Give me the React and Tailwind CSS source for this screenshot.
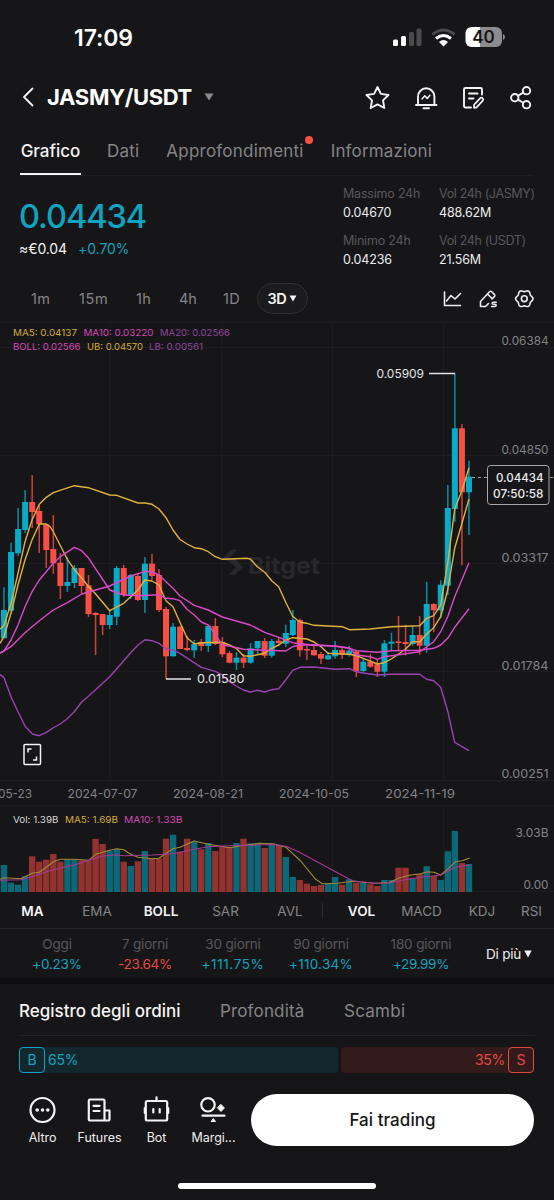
import React from 'react';

// top, bottom, high, low, direction (y coordinates inside the chart)
const candles = [
  [610, 638.3, 587.3, 638.3, 'u'], [552, 610.7, 542.7, 612, 'u'], [529, 553.3, 508, 556, 'u'],
  [502, 530, 490, 533, 'u'], [502, 512, 475, 528, 'd'], [511, 524.3, 505, 553, 'd'],
  [524.3, 550, 524, 568, 'd'], [549, 563.3, 515, 574, 'd'], [562.7, 586, 553, 599, 'd'],
  [582, 586, 557, 592, 'u'], [568, 583, 565, 588, 'u'], [568, 586, 568, 593, 'd'],
  [585.3, 614, 575, 617, 'd'], [613, 615, 612, 655, 'd'], [614, 625, 614, 635, 'd'],
  [615, 625, 610, 629, 'u'], [568, 616.7, 566, 625, 'u'], [568, 595, 565, 597, 'd'],
  [575, 595, 574, 599, 'u'], [576, 600, 574, 601, 'd'], [563.7, 600, 557, 613, 'u'],
  [563.7, 576, 554, 580, 'd'], [575, 610, 569, 612, 'd'], [609, 656.3, 607, 679, 'd'],
  [626.7, 656.3, 623, 656.3, 'u'], [626.7, 649, 626, 649, 'd'], [648, 650, 636, 651, 'd'],
  [644.3, 650.3, 640, 657.7, 'u'], [642, 646, 639, 651, 'd'], [626, 646, 626, 652, 'u'],
  [626, 644, 618, 645, 'd'], [642, 654.3, 637, 657, 'd'], [653, 662.7, 651, 663.3, 'd'],
  [657.7, 662.7, 652, 670, 'u'], [657.7, 662.7, 654, 668, 'd'], [648.3, 662.7, 643, 663.7, 'u'],
  [641, 648.3, 641, 654, 'u'], [641, 655.7, 638, 658, 'd'], [641, 655.7, 639, 657.7, 'u'],
  [640.7, 643, 637.7, 646, 'd'], [633, 643.7, 624.7, 647, 'u'], [620, 635, 610, 636, 'u'],
  [620, 650.3, 618.7, 656.7, 'd'], [649, 650.5, 646, 660, 'd'], [650, 655.3, 644, 655.7, 'd'],
  [654, 658.7, 652, 664, 'd'], [655.3, 659.3, 652, 660, 'u'], [650, 656.3, 641, 658.7, 'u'],
  [650, 654.7, 647, 659, 'd'], [650.7, 655, 646, 656.7, 'u'], [651.5, 671.5, 650, 677, 'd'],
  [661.7, 671, 658, 672, 'u'], [661.7, 666.7, 654, 667.7, 'd'], [664.3, 671.7, 659, 677, 'd'],
  [643.3, 671.7, 640, 677, 'u'], [641.7, 643.7, 632.7, 650, 'u'], [641.5, 643, 616, 650, 'd'],
  [642, 644, 624.7, 655.3, 'd'], [635, 644, 626, 645.7, 'u'], [635, 645.7, 616, 654.7, 'd'],
  [604, 645.7, 581.7, 652.7, 'u'], [604, 610.3, 603.3, 632.3, 'd'], [584.7, 610.3, 580.3, 618.3, 'u'],
  [508, 585.7, 485, 595, 'u'], [428.3, 509, 373.3, 521.7, 'u'], [428.3, 492.3, 424, 565.3, 'd'],
  [476.7, 492.3, 460.7, 535, 'u'],
];

const volumes = [
  865, 882.7, 884.7, 876.3, 856.3, 861.7, 859.7, 854, 861.7, 859.3, 859.3, 860.3, 860.3, 839, 844,
  851, 849, 861.7, 866, 861.3, 851, 858.3, 858.3, 838.7, 834.7, 851.7, 838.7, 841.7, 849.3, 843,
  851, 846.3, 847, 843, 838.7, 843.3, 843.3, 848, 843.3, 845, 857, 877, 880, 883.7, 886, 885, 884,
  877, 884.7, 879.3, 882.7, 883, 884.3, 886, 880, 880, 867.7, 867.7, 878.7, 874, 866.3, 876, 880,
  851.3, 831, 863, 864,
];

const lines = [
  {
    color: '#e0b13c',
    points: '0,629 4,625.7 11,603.3 18,573.3 25,541.7 32,520 39.3,504.3 46.3,497.3 53.3,492.7 63,489.3 74.3,485.7 88.3,487.7 109.7,495 116.7,495.3 138,503 145,503 152,504.3 159,509 166,517.7 173,530 180,539.5 187,544 194.3,547.7 201.3,548.7 208.3,551.7 215.3,556.7 222.3,559.3 229.3,559 246.7,558.3 250.3,559 257.3,566.7 264.7,572.3 271.7,580.7 278.7,586.7 285.7,602.3 292.7,616.3 300,622.3 307,623.3 314,625.3 342.3,626.7 349.3,629.7 370.3,629 391.3,626.7 419.7,625.7 426.7,618.3 433.7,615.7 440.7,605 447.7,563.3 454.7,509 462,490.5 469,467.7',
  },
  {
    color: '#e0b13c',
    points: '0,643.3 4,636.7 11,613.3 18,585 25,560 32,540 39.3,524 46.3,524 50,526.7 53.3,531.7 67.3,559.3 74.3,569.3 88.7,586.7 95.7,594 109.7,610.7 123.7,603.3 138,590 145,580 152,581 159,585 166,600.7 173,606.7 180,622.5 187,637.7 194.3,644 201.3,642.7 222.3,642.3 229.3,645 236.3,648.3 243.3,655.7 250.3,656.3 264.7,653.3 271.7,648.3 278.7,645 285.7,640 292.7,637.7 307,639 314,642 321,646.7 328,653.3 342.3,654 350,654.3 356.3,655.7 363.3,658.3 377.3,664 384.3,662.7 391.3,659 405.7,649 412.7,641.7 419.7,641.7 426.7,634 433.7,627.7 440.7,616.7 447.7,590 454.7,548.3 469,499',
  },
  {
    color: '#dd49c6',
    points: '0,653.3 4,651 11,640 18,625 25,606.7 32,591.7 39.3,580 53.3,563.3 60.3,556.7 74.3,547.3 81.7,550.7 88.7,558.3 109.7,590 123.7,595 138,595.7 159,594.7 166,598.3 173,598.7 180,600.7 187,609.3 194.3,615 201.3,622 208.3,625 215.3,634.3 222.3,645 229.3,646 243.3,649.3 285.7,651 292.7,646.7 300,645 314,644.7 335,646.3 349.3,648 356.3,655 370.3,656.7 377.3,659.3 384.3,656.7 405.7,653.7 419.7,651.7 426.7,646.7 433.7,641.7 440.7,631.7 447.7,616.7 454.7,596.7 469,562.7',
  },
  {
    color: '#dd49c6',
    points: '0,652.7 4,651 11,646.7 25,632.7 39.3,620.7 53.3,610 67.3,602.7 81.7,594 109.7,586 130.7,576 145,571.3 152,572 159,575 166,581.7 173,588.3 180,596 194.3,605.3 208.3,610 222.3,617 250.3,625 264.7,632.3 278.7,637.3 292.7,642.7 314,645.3 335,646 349.3,648.3 356.7,650.7 377.3,652.3 391.3,650.7 419.7,650.3 433.7,648.3 440.7,645 447.7,638.3 454.7,627.3 469,608.7',
  },
  {
    color: '#9a43b0',
    points: '0,674.3 4,677.7 11,696.7 18,711.7 25.4,726.7 32.5,734 39,735.7 46,732.7 53,728 60,724 67,719 74,712 81.7,702 88.7,696 109.7,676.7 130.7,652.7 138,645 145,639.7 152,640.7 159,643.3 166,649 173,650 180,653.3 201.3,667.3 215.3,671.3 222.3,675 229.3,681.7 236.3,686 243.3,690 250.3,692 257.3,690.3 264.7,692 271.7,689.7 278.7,688.7 285.7,680 292.7,670.3 300,667.3 314,667 335,669.3 349.3,668.7 356.3,671.7 363.3,673 377.3,675 391.3,674.3 419.7,674.3 426.7,679.3 433.7,680.7 440.7,687.3 447.7,711 454.7,742.3 469,750.7',
  },
];

const volumeLines = [
  {
    color: '#a58a35',
    points: '0,879.3 4,877.7 21,878.7 25,876.7 32,873.3 39.3,872.3 46.3,867.3 53.3,861.7 60.3,859.3 74.3,859.3 88.7,860.3 95.7,854.3 109.7,850.3 116.7,848.7 123.7,849.7 130.7,854.3 138,857.3 152,858.7 159,858.3 166,853.3 173,848.7 180,847.3 194.3,841 208.3,844.3 230,847.7 241.7,845.7 260,843.3 274,844 286,847.3 300.7,861 315.7,879.3 322.3,883.7 337.3,883.3 354,881.3 374,883.3 389,882.7 399,878 410.7,875 420.7,873.7 427.3,871.7 434,872.3 440.7,875 447.3,869.3 455.7,861.7 462.3,860.7 469.7,858',
  },
  {
    color: '#a43a94',
    points: '0,880.3 21.3,879.7 32,876.7 46.3,871.7 60.3,868 74.3,865 88.7,860.3 102.7,856 116.7,854.7 123.7,855.7 152,855 173,853.7 194.3,849.3 208.3,846.7 230,845.7 274,844.5 286,846.3 299,852 315.7,861 332.3,870 352.3,880.7 374,883.3 389,883 407.3,879.3 424,877 440.7,875 455.7,867 469.7,865.3',
  },
];

const priceLabels = [
  ['0.06384', 345.3], ['0.04850', 453.5], ['0.03317', 561.5], ['0.01784', 669.5], ['0.00251', 777.5],
];
const dates = [
  ['2024-07-07', 67.5], ['2024-08-21', 173], ['2024-10-05', 279], ['2024-11-19', 385],
];
const legend = [
  ['MA5: 0.04137', 13, 336, 64, '#d5ac37'],
  ['MA10: 0.03220', 83.5, 336, 70, '#d545b7'],
  ['MA20: 0.02566', 160, 336, 70, '#8f459f'],
  ['BOLL: 0.02566', 13, 349.6, 67.5, '#d545b7'],
  ['UB: 0.04570', 87, 349.6, 56, '#d5ac37'],
  ['LB: 0.00561', 149, 349.6, 54, '#8f459f'],
  ['Vol: 1.39B', 13, 822.5, 45.5, '#d5d5d7'],
  ['MA5: 1.69B', 65, 822.5, 53, '#d5ac37'],
  ['MA10: 1.33B', 124, 822.5, 58.5, '#d545b7'],
];

const candleX = (i) => 4 + i * 7.045;

// Wavy six-lobed outline for the settings icon
const gearPath = (cx, cy) => {
  const points = [];
  for (let deg = 0; deg < 360; deg += 6) {
    const a = (deg * Math.PI) / 180;
    const r = 7.9 + 0.8 * Math.cos(6 * a);
    points.push(`${(cx + r * Math.cos(a)).toFixed(2)} ${(cy + r * Math.sin(a)).toFixed(2)}`);
  }
  return `M${points.join('L')}Z`;
};

const ChartText = ({ width, children, ...props }) => (
  <text textLength={width} lengthAdjust="spacingAndGlyphs" {...props}>{children}</text>
);

const Chart = () => (
  <svg width="554" height="574" viewBox="0 320 554 574" className="block shrink-0" fontFamily="Inter, sans-serif">
    {/* Grid */}
    <g stroke="#1d1d1f" strokeWidth="1">
      {[347.5, 455.5, 563.5, 671.5, 891.5].map((y) => <path key={y} d={`M0 ${y}H554`} />)}
      {[110, 222, 332.5, 443.5].map((x) => <path key={x} d={`M${x} 322V780M${x} 806V892`} />)}
      <path d="M0 322H554M0 780.5H554M0 806H554" stroke="#212123" />
    </g>

    {/* Watermark */}
    <g fill="#28282b">
      <path d="M222 559l9-9.500h6.500l-8.500 8.500h5l9 9-8.500 8h-6l7.500-8-8-6z" />
      <ChartText x="248" y="574" fontSize="23" fontWeight="700" width="72">Bitget</ChartText>
    </g>

    {/* Candles */}
    {candles.map(([top, bottom, high, low, dir], i) => {
      const x = candleX(i);
      return (
        <g key={i} fill={dir === 'u' ? '#07abc8' : '#f94f45'}>
          <rect x={x - 0.75} y={high} width="1.5" height={low - high} opacity="0.8" />
          <rect x={x - 3} y={top} width="6" height={Math.max(bottom - top, 1.5)} />
        </g>
      );
    })}
    {lines.map((line, i) => (
      <polyline key={i} points={line.points} fill="none" stroke={line.color} strokeWidth="1.4" strokeLinejoin="round" />
    ))}

    {/* Volume */}
    {volumes.map((y, i) => (
      <rect key={i} x={candleX(i) - 3.2} y={y} width="6.4" height={892 - y} fill={candles[i][4] === 'u' ? '#0b6878' : '#923330'} />
    ))}
    {volumeLines.map((line, i) => (
      <polyline key={i} points={line.points} fill="none" stroke={line.color} strokeWidth="1.1" strokeLinejoin="round" />
    ))}

    {/* High and low markers */}
    <path d="M429 373.500H455M166 679H191" stroke="#e4e4e6" strokeWidth="1.300" />
    <g fill="#e4e4e6" fontSize="11.700">
      <ChartText x="376.500" y="378.300" width="47.500">0.05909</ChartText>
      <ChartText x="197" y="683.300" width="47.500">0.01580</ChartText>
    </g>

    {/* Axis labels */}
    <g fill="#838385" fontSize="11.700">
      {priceLabels.map(([label, y]) => <ChartText key={label} x="501.500" y={y} width="47">{label}</ChartText>)}
      <ChartText x="515.500" y="836.800" width="33">3.03B</ChartText>
      <ChartText x="523.500" y="889.300" width="25">0.00</ChartText>
    </g>
    <g fill="#838385" fontSize="11.500">
      <ChartText x="-2" y="798" width="34">05-23</ChartText>
      {dates.map(([label, x]) => <ChartText key={label} x={x} y="798" width="70">{label}</ChartText>)}
    </g>
    {legend.map(([label, x, y, width, color]) => (
      <ChartText key={label} x={x} y={y} width={width} fill={color} fontSize="9.500">{label}</ChartText>
    ))}

    {/* Current price */}
    <path d="M472 477.500H554" stroke="#a0a0a2" strokeWidth="1" strokeDasharray="3 3" />
    <rect x="487.500" y="465.500" width="61.500" height="39" rx="3" fill="#161618" stroke="#a9a9ab" />
    <g fill="#ededef" fontSize="11.700" fontWeight="500">
      <ChartText x="496" y="482.200" width="47.500">0.04434</ChartText>
      <ChartText x="493" y="497.800" width="50.500">07:50:58</ChartText>
    </g>

    {/* Fullscreen */}
    <g fill="none" stroke="#f4f4f4" strokeWidth="1.500">
      <rect x="24" y="744.500" width="16.500" height="20" rx="1" />
      <path d="M28 752.500V749h3.500M36.500 756.500V760H33" />
    </g>
  </svg>
);

const StatusBar = () => (
  <div className="flex h-[76px] shrink-0 items-center justify-between pl-[74px] pr-[48px]">
    <span className="text-[23px] font-semibold leading-7 tracking-[-0.100px]">17:09</span>
    <svg width="114" height="22" viewBox="392 27 114 22">
      <g fill="#fff">
        <rect x="393" y="39.500" width="5" height="6.500" rx="1.500" />
        <rect x="401" y="36" width="5" height="10" rx="1.500" />
        <g fill="#4b4b4d">
          <rect x="409" y="32" width="5" height="14" rx="1.500" />
          <rect x="416.500" y="28.500" width="5" height="17.500" rx="1.500" />
        </g>
      </g>
      <g fill="none" strokeWidth="3">
        <path d="M432.500 34.500Q443.500 25.500 454.500 34.500" stroke="#4b4b4d" />
        <path d="M436 38.500Q443.500 32.500 451 38.500" stroke="#fff" />
      </g>
      <path d="M439 42Q443.500 38 448 42L443.500 46.500Z" fill="#fff" />
      <path d="M471.500 27H480V47H471.500a6 6 0 0 1-6-6V33a6 6 0 0 1 6-6Z" fill="#fff" />
      <path d="M480 27h16a6 6 0 0 1 6 6v8a6 6 0 0 1-6 6H480Z" fill="#8c8c8e" />
      <path d="M503 34q2 1 2 3t-2 3Z" fill="#8c8c8e" />
      <text x="483.500" y="43" textAnchor="middle" fontSize="17" fontWeight="600" fontFamily="Inter, sans-serif" fill="#161618">40</text>
    </svg>
  </div>
);

const Header = () => (
  <div className="flex h-[42px] shrink-0 items-center pl-[22px] pr-[20px]">
    <svg width="13" height="20" viewBox="0 0 13 20" fill="none" stroke="#f4f4f4" strokeWidth="1.800" strokeLinecap="round" strokeLinejoin="round">
      <path d="M10.500 1.500L2 10l8.500 8.500" />
    </svg>
    <h1 className="ml-[12px] text-[22px] font-bold leading-7 tracking-[-0.350px]">JASMY/USDT</h1>
    <svg className="ml-3" width="10" height="8" viewBox="0 0 10 8" fill="#8c8c8e"><path d="M.5.500h9L5 7.500z" /></svg>
    <svg className="ml-auto mt-[2px]" width="170" height="26" viewBox="364 85 170 26" fill="none" stroke="#f4f4f4" strokeWidth="1.900" strokeLinecap="round" strokeLinejoin="round">
      <path d="M377.500 87l3.400 6.900 7.600 1.100-5.500 5.400 1.300 7.600-6.800-3.600-6.800 3.600 1.300-7.600-5.500-5.400 7.600-1.100z" />
      <path d="M416 105h20.500M418 105v-8.500a8.200 8.200 0 0 1 16.400 0v8.500" />
      <path d="M423.500 108.300h5.500" />
      <path d="M422 99l2.800-3.200 2.400 2.600 2.700-3.200" strokeWidth="1.500" />
      <path d="M471 107.500h-5.500a1.500 1.500 0 0 1-1.500-1.500V89.500a1.500 1.500 0 0 1 1.500-1.500h15a1.500 1.500 0 0 1 1.500 1.500v5M469 93.500h8.500M469 98.500h4.500" />
      <path d="M474 107.800v-3l6-6.500a1.800 1.800 0 0 1 2.600 2.600l-6 6.500z" strokeWidth="1.700" />
      <circle cx="526.500" cy="90.700" r="3.700" /><circle cx="514.800" cy="97.700" r="3.700" /><circle cx="526.500" cy="104.700" r="3.700" />
      <path d="M518 95.800l5.200-3.200M518 99.600l5.200 3.200" />
    </svg>
  </div>
);

const Tabs = () => (
  <div className="mx-[20px] flex h-[58px] shrink-0 border-b border-[#202022] text-[17px] leading-6 text-[#858587]">
    <div className="flex w-[61px] flex-col items-center border-b-[2.500px] border-[#f4f4f4] pt-[21px] font-medium text-[#f4f4f4]">Grafico</div>
    <div className="ml-[26px] pt-[21px] tracking-[0.200px]">Dati</div>
    <div className="relative ml-[27px] pt-[21px] tracking-[0.230px]">
      Approfondimenti
      <span className="absolute -right-[9px] top-[18px] h-2 w-2 rounded-full bg-[#f94f45]" />
    </div>
    <div className="ml-[27px] pt-[21px] tracking-[0.150px]">Informazioni</div>
  </div>
);

const Stat = ({ label, value }) => (
  <div className="h-[47px] text-[12.500px] leading-[19px]">
    <p className="tracking-[-0.200px] text-[#58585a]">{label}</p>
    <p className="tracking-[-0.150px] text-[#ededef]">{value}</p>
  </div>
);

const PriceSummary = () => (
  <div className="flex h-[104px] shrink-0 justify-between pl-[19px]">
    <div className="pt-[21px]">
      <p className="text-[32.500px] font-medium leading-10 tracking-[-1.050px] text-[#0fa3bf]">0.04434</p>
      <p className="mt-[2px] text-[14px] leading-5 text-[#f4f4f4]"><span className="tracking-[-0.100px]">≈€0.04</span> <span className="ml-[7px] tracking-[-0.050px] text-[#0fa3bf]">+0.70%</span></p>
    </div>
    <div className="flex pt-[8px]">
      <div className="w-[96px]">
        <Stat label="Massimo 24h" value="0.04670" />
        <Stat label="Minimo 24h" value="0.04236" />
      </div>
      <div className="w-[115px] whitespace-nowrap">
        <Stat label={<span className="tracking-[-0.350px]">Vol 24h (JASMY)</span>} value="488.62M" />
        <Stat label={<span className="tracking-[-0.350px]">Vol 24h (USDT)</span>} value="21.56M" />
      </div>
    </div>
  </div>
);

const Timeframes = () => (
  <div className="flex h-[40px] shrink-0 items-center pl-[31px] pr-[19px] pb-[3px] text-[14.500px] leading-5 text-[#858587]">
    <span className="w-[48px] tracking-[0.300px]">1m</span>
    <span className="w-[57px] tracking-[0.600px]">15m</span>
    <span className="w-[43px] tracking-[0.400px]">1h</span>
    <span className="w-[44px]">4h</span>
    <span className="w-[34px] tracking-[0.300px]">1D</span>
    <span className="flex h-[31px] w-[51px] items-center justify-center gap-[3px] rounded-full border border-[#303032] bg-[#1b1b1d] font-semibold tracking-[-0.400px] text-[#f4f4f4]">
      3D
      <svg width="8" height="7" viewBox="0 0 8 7" fill="#f4f4f4"><path d="M.5.500h7L4 6.500z" /></svg>
    </span>
    <svg className="ml-auto" width="94" height="20" viewBox="441 288.500 94 20" fill="none" stroke="#ededef" strokeWidth="1.600" strokeLinecap="round" strokeLinejoin="round">
      <path d="M444.500 291.500v13.500h16M446.500 300.500l4.500-5.500 4 3.500 5.500-5.500" />
      <path d="M485.500 306h-5v-5l9-9.700a1.500 1.500 0 0 1 2.200 0l2.600 2.600a1.500 1.500 0 0 1 0 2.200l-2.300 2.400M485.500 306l3-3M487.500 293.500l4.500 4.500" />
      <path d="M496.300 301.800h-2.800q-1.500 0-1.500 1t1.500 1h1.300q1.500 0 1.500 1t-1.500 1.200H491.500" strokeWidth="1.400" />
      <path d={gearPath(524.3, 298.2)} />
      <circle cx="524.300" cy="298.200" r="2.900" />
    </svg>
  </div>
);

const Indicators = () => (
  <div className="flex h-[35px] shrink-0 items-center border-b border-[#252527] text-[13.500px] leading-5 text-[#858587]">
    <span className="w-[65px] text-center font-semibold text-[#f4f4f4]">MA</span>
    <span className="w-[64px] text-center">EMA</span>
    <span className="w-[64px] text-center font-semibold text-[#f4f4f4]">BOLL</span>
    <span className="w-[65px] text-center">SAR</span>
    <span className="w-[64px] text-center">AVL</span>
    <span className="h-4 w-px bg-[#2c2c2e]" />
    <span className="w-[77px] text-center font-semibold text-[#f4f4f4]">VOL</span>
    <span className="w-[43px] text-center">MACD</span>
    <span className="w-[78px] text-center">KDJ</span>
    <span className="w-[20px] text-center">RSI</span>
  </div>
);

const performance = [
  { label: 'Oggi', value: '+0.23%', width: 'w-[88px]', color: 'text-[#0fa3bf] tracking-[-0.200px]' },
  { label: '7 giorni', value: '-23.64%', width: 'w-[88px]', color: 'text-[#e54a42] tracking-[-0.250px]' },
  { label: '30 giorni', value: '+111.75%', width: 'w-[88px]', color: 'text-[#0fa3bf] tracking-[0.600px]' },
  { label: '90 giorni', value: '+110.34%', width: 'w-[88px]', color: 'text-[#0fa3bf] tracking-[0.250px]' },
  { label: '180 giorni', value: '+29.99%', width: 'w-[112px]', color: 'text-[#0fa3bf] tracking-[-0.350px]' },
];

const Performance = () => (
  <div className="flex h-[49px] shrink-0 pl-[13px] text-[13.500px] leading-5">
    {performance.map((item) => (
      <div key={item.label} className={`${item.width} pt-[5px] text-center`}>
        <p className="tracking-[-0.150px] text-[#58585a]">{item.label}</p>
        <p className={item.color}>{item.value}</p>
      </div>
    ))}
    <div className="ml-[9px] flex items-center gap-[3px] whitespace-nowrap tracking-[-0.200px] text-[#ededef]">
      Di più
      <svg width="8" height="8" viewBox="0 0 8 8" fill="#f4f4f4"><path d="M.3.500h7.400L4 7.500z" /></svg>
    </div>
  </div>
);

const OrderBook = () => (
  <div className="h-[104px] shrink-0 px-[19px]">
    <div className="flex h-[52px] items-center border-b border-[#232325] pt-[2px] text-[17px] leading-6 text-[#858587]">
      <span className="w-[201px] whitespace-nowrap font-medium text-[#f4f4f4]">Registro degli ordini</span>
      <span className="w-[124px] tracking-[0.150px]">Profondità</span>
      <span className="tracking-[0.250px]">Scambi</span>
    </div>
    <div className="mt-[11px] flex h-[26px] w-[515px] gap-[3px] text-[14px] leading-5">
      <div className="flex w-[319px] items-center rounded bg-[#12282e] text-[#0fa3bf]">
        <span className="flex h-[26px] w-[26px] items-center justify-center rounded border border-[#0fa3bf]">B</span>
        <span className="ml-[3px] tracking-[-0.200px]">65%</span>
      </div>
      <div className="flex flex-1 items-center justify-end rounded bg-[#331b1c] text-[#e54a42]">
        <span className="mr-[3px] tracking-[-0.300px]">35%</span>
        <span className="flex h-[26px] w-[26px] items-center justify-center rounded border border-[#e54a42]">S</span>
      </div>
    </div>
  </div>
);

const NavItem = ({ label, children }) => (
  <div className="flex w-[57px] flex-col items-center">
    <svg width="30" height="30" viewBox="0 0 30 30" fill="none" stroke="#f4f4f4" strokeWidth="2.200" strokeLinecap="round" strokeLinejoin="round">
      {children}
    </svg>
    <span className="mt-[5px] text-[12.500px] leading-4 tracking-[-0.050px] text-[#ededef]">{label}</span>
  </div>
);

const BottomBar = () => (
  <div className="flex h-[112px] shrink-0 pl-[14px] pr-[20px]">
    <div className="flex pt-[7px]">
      <NavItem label="Altro">
        <circle cx="14.500" cy="15" r="12" />
        <g fill="#f4f4f4" stroke="none">
          <circle cx="9.200" cy="15" r="1.800" /><circle cx="14.500" cy="15" r="1.800" /><circle cx="19.800" cy="15" r="1.800" />
        </g>
      </NavItem>
      <NavItem label="Futures">
        <path d="M19.500 25.500H5A1.200 1.200 0 0 1 3.800 24.300V5.700A1.200 1.200 0 0 1 5 4.500H18.300a1.200 1.200 0 0 1 1.200 1.200zM19.500 15.500h5v8.800a1.200 1.200 0 0 1-1.200 1.200h-3.800M8.500 10.800h6M8.500 16h6" />
      </NavItem>
      <NavItem label="Bot">
        <rect x="3.800" y="6" width="21.400" height="19.500" rx="1.500" />
        <path d="M14.500 2.300v3.500M2.800 13v5M26.200 13v5M11.300 14v3.500M17.700 14v3.500" />
      </NavItem>
      <NavItem label="Margi...">
        <circle cx="9" cy="9.800" r="6.700" />
        <path d="M3.500 20.700h22" />
        <path d="M22 9.500l3.400 3.500-3.400 3.500-3.400-3.500zM14.500 23.800l2 2.700h-4z" fill="#f4f4f4" strokeWidth="1" />
      </NavItem>
    </div>
    <button className="ml-auto mt-[6px] h-[52px] w-[283px] rounded-full bg-white text-[17px] font-medium leading-6 tracking-[0.050px] text-[#161618]">Fai trading</button>
  </div>
);

const App = () => {
  return (
    <div className="flex h-[1200px] w-[554px] flex-col overflow-hidden bg-[#161618] font-['Inter',sans-serif] text-white">
      <StatusBar />
      <Header />
      <Tabs />
      <PriceSummary />
      <Timeframes />
      <Chart />
      <Indicators />
      <Performance />
      <div className="h-[6px] shrink-0 bg-[#0e0e10]" />
      <OrderBook />
      <BottomBar />
      <div className="mx-auto mt-[-17px] h-[6px] w-[198px] shrink-0 rounded-full bg-white" />
    </div>
  );
};

export default App;
